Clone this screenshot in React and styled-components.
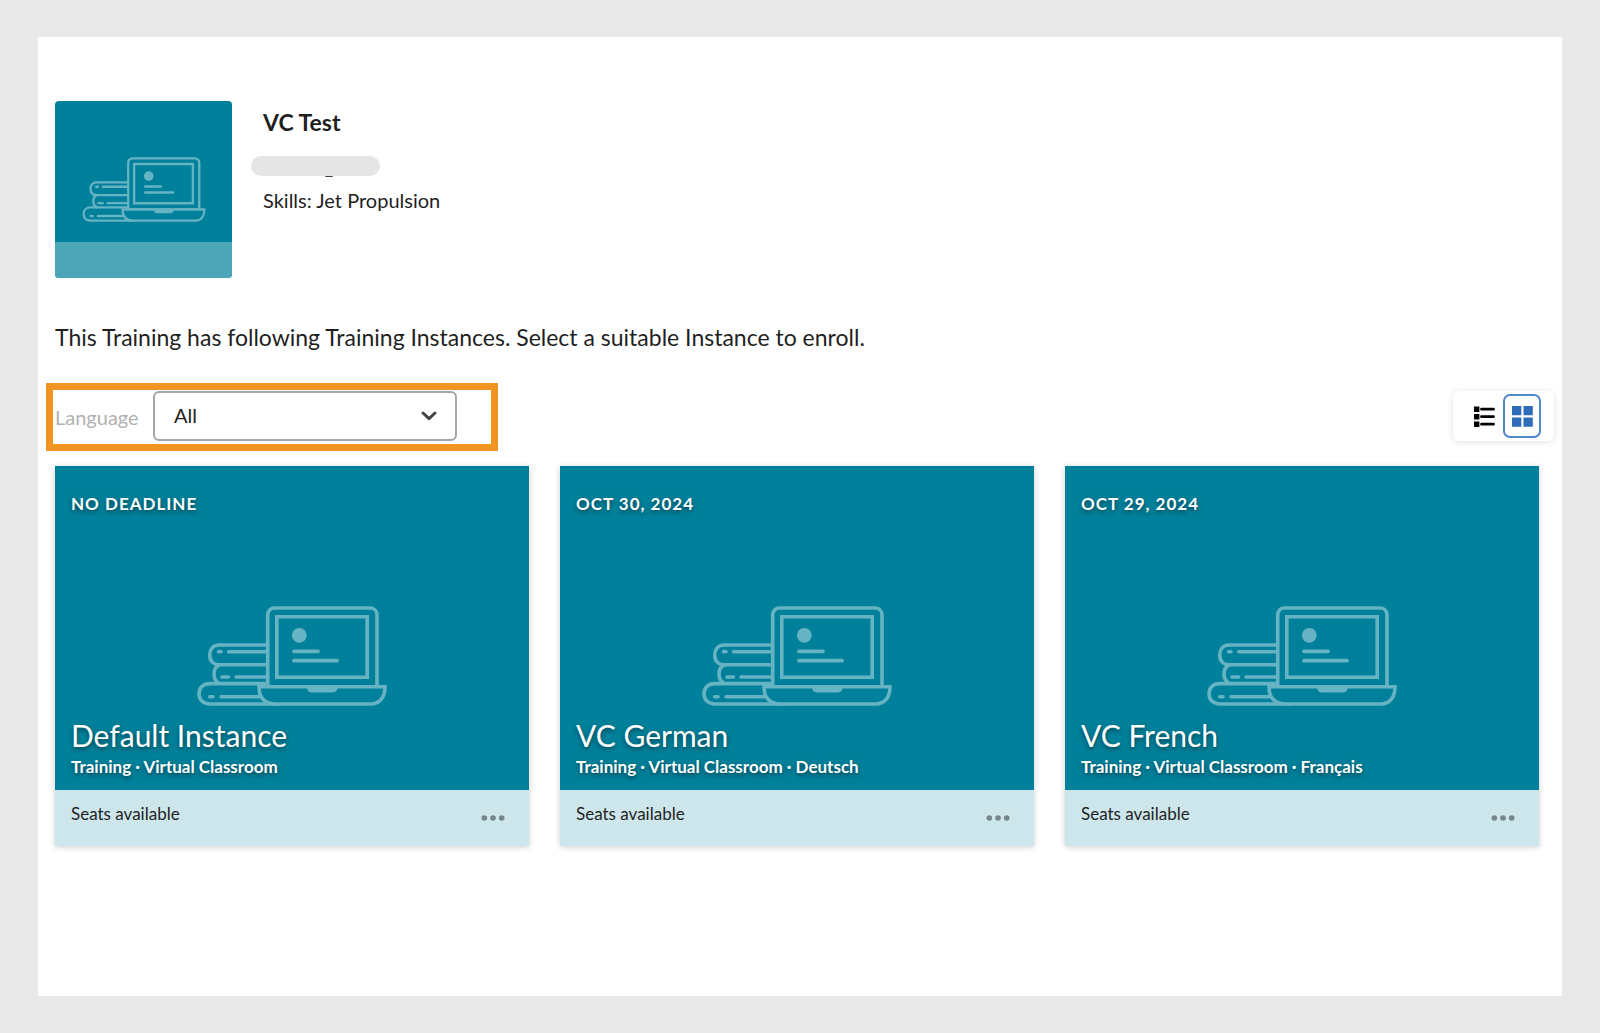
import React, { useState } from "react";
import styled, { createGlobalStyle } from "styled-components";

const TEAL = "#00809a";

const GlobalStyle = createGlobalStyle`
  *, *::before, *::after { box-sizing: border-box; }
  body {
    margin: 0;
    background: #e9e9e9;
    color: #1f1f1f;
    font-family: Lato, "Open Sans", "Noto Sans", sans-serif;
  }
  h1, h2, p { margin: 0; font-weight: 400; }
  button, select { font: inherit; color: inherit; }
`;

const Page = styled.div`
  min-height: 100vh;
  padding: 37px 38px;
  display: flex;
`;

const Panel = styled.main`
  flex: 1;
  background: #fff;
  padding: 64px 23px 64px 17px;
`;

const Header = styled.header`
  display: flex;
  gap: 31px;
`;

const Thumbnail = styled.div`
  width: 177px;
  height: 177px;
  border-radius: 4px;
  overflow: hidden;
  background: ${TEAL};
  display: flex;
  flex-direction: column;
  justify-content: flex-end;
  align-items: center;
  gap: 20px;
`;

const ThumbnailStrip = styled.div`
  align-self: stretch;
  height: 36px;
  background: #4da6b8;
`;

const Summary = styled.div`
  padding-top: 6px;
  display: flex;
  flex-direction: column;
`;

const CourseTitle = styled.h1`
  font-size: 23px;
  line-height: 30px;
  font-weight: 700;
`;

const Redaction = styled.div`
  width: 129px;
  height: 20px;
  margin: 19px 0 9px -12px;
  border-radius: 10px;
  background: #e5e5e5;
  position: relative;

  &::after {
    content: "";
    position: absolute;
    left: 74px;
    top: 20px;
    width: 8px;
    height: 1px;
    border-radius: 0 0 4px 4px;
    background: #444;
  }
`;

const Skills = styled.p`
  font-size: 20px;
  line-height: 30px;
`;

const Intro = styled.p`
  margin-top: 43px;
  font-size: 23px;
  line-height: 32px;
`;

const Toolbar = styled.div`
  display: flex;
  align-items: center;
  justify-content: space-between;
  margin: 30px -15px 15px -9px;
`;

const LanguageFilter = styled.div`
  display: flex;
  align-items: center;
  gap: 12px;
  width: 452px;
  height: 68px;
  padding: 0 2px 2px;
  border: 7px solid #f29422;
`;

const FilterLabel = styled.label`
  width: 86px;
  padding-top: 2px;
  font-size: 20px;
  line-height: 30px;
  color: #b1b1b1;
`;

const SelectBox = styled.div`
  display: grid;
  align-items: center;
  width: 304px;

  & > * { grid-area: 1 / 1; }
  & > svg {
    justify-self: end;
    margin-right: 19px;
    pointer-events: none;
  }
`;

const Select = styled.select`
  appearance: none;
  width: 100%;
  height: 50px;
  padding: 0 48px 2px 19px;
  border: 2px solid #a6a6a6;
  border-radius: 6px;
  background: #fff;
  font-size: 20px;
`;

const ViewSwitch = styled.div`
  display: flex;
  align-items: center;
  height: 50px;
  margin-bottom: 2px;
  padding: 0 13px 0 12px;
  border-radius: 6px;
  background: #fff;
  box-shadow: 0 1px 6px rgba(0, 0, 0, 0.12);
`;

const ViewButton = styled.button`
  display: flex;
  align-items: center;
  justify-content: center;
  width: 38px;
  height: 44px;
  padding: 0;
  border: 2px solid ${(p) => (p.$active ? "#5088cc" : "transparent")};
  border-radius: 7px;
  background: transparent;
  color: ${(p) => (p.$active ? "#2c6cb8" : "#000")};
  cursor: pointer;
`;

const Cards = styled.section`
  display: grid;
  grid-template-columns: repeat(3, 1fr);
  gap: 31px;
`;

const Card = styled.article`
  box-shadow: 0 1px 6px rgba(0, 0, 0, 0.2);
`;

const CardCover = styled.div`
  display: flex;
  flex-direction: column;
  height: 324px;
  padding: 26px 16px 11px;
  background: ${TEAL};
  color: #fff;
  text-shadow: 0 2px 4px rgba(0, 0, 0, 0.5);

  & > svg {
    align-self: center;
    margin: auto 0 9px;
  }
`;

const Deadline = styled.p`
  font-size: 17px;
  line-height: 24px;
  font-weight: 700;
  letter-spacing: 1px;
  text-transform: uppercase;
`;

const CardTitle = styled.h2`
  font-size: 30px;
  line-height: 40px;
`;

const CardMeta = styled.p`
  font-size: 17px;
  line-height: 24px;
  font-weight: 700;
`;

const CardFooter = styled.footer`
  display: flex;
  align-items: center;
  justify-content: space-between;
  height: 56px;
  padding: 0 16px;
  background: #cde6eb;
`;

const Seats = styled.p`
  padding-bottom: 8px;
  font-size: 17px;
  line-height: 24px;
`;

const MoreButton = styled.button`
  display: flex;
  align-items: center;
  justify-content: center;
  width: 40px;
  height: 32px;
  padding: 0;
  border: 0;
  background: transparent;
  color: #76858a;
  cursor: pointer;
`;

function ClassroomArt({ width }) {
  return (
    <svg
      width={width}
      height={Math.round((width * 100) / 190)}
      viewBox="0 0 190 100"
      fill="none"
      stroke="#66b3c3"
      strokeWidth="3.6"
      aria-hidden="true"
    >
      <path d="M70 39H22C16 39 12.7 43.5 12.7 49C12.7 54.5 16 58.7 22 58.7H70" />
      <path d="M23 58.7C19 60 17 64 17 68C17 72.5 19 76 23 77.6" />
      <path d="M70 77.6H13C6 77.6 2 82 2 87.8C2 93.6 6 98 13 98H84" />
      <path
        strokeLinecap="round"
        d="M21.5 45.7H24M31.5 45.7H69M25 71H31.5M39 71H69M12.7 90.7H16M24 90.7H62"
      />
      <path
        fill={TEAL}
        d="M70.7 80.7V9C70.7 4.8 73.5 2 77.5 2H173C177 2 180 4.8 180 9V80.7Z"
      />
      <path d="M79.8 10.8H170.2V71.2H79.8Z" />
      <path fill={TEAL} d="M62 80.7H188C188 91 183 98 174 98H79C67 98 62 91 62 80.7Z" />
      <circle cx="102.3" cy="29.3" r="7.4" fill="#66b3c3" stroke="none" />
      <path strokeLinecap="round" strokeWidth="3.8" d="M97 45.3H121M97 54.7H140" />
      <path fill="#66b3c3" stroke="none" d="M110 80H140.7C140.7 84.5 139 86.4 136 86.4H114.5C111.5 86.4 110 84.5 110 80Z" />
    </svg>
  );
}

function ChevronIcon() {
  return (
    <svg width="18" height="12" viewBox="0 0 18 12" fill="none" aria-hidden="true">
      <path d="M3 3L9 8.6L15 3" stroke="#444" strokeWidth="3" strokeLinecap="round" strokeLinejoin="round" />
    </svg>
  );
}

function ListIcon() {
  return (
    <svg width="21" height="21" viewBox="0 0 21 21" fill="currentColor" aria-hidden="true">
      <path d="M0 0.5h5.4v5.4H0zM0 8h5.4v5.4H0zM0 15.5h5.4v5.4H0z" />
      <path d="M7.5 3.2H19.5M7.5 10.7H19.5M7.5 18.2H19.5" stroke="currentColor" strokeWidth="2.8" strokeLinecap="round" />
    </svg>
  );
}

function GridIcon() {
  return (
    <svg width="21" height="21" viewBox="0 0 21 21" fill="currentColor" aria-hidden="true">
      <path d="M0 0h9.3v9.3H0zM11.5 0h9.3v9.3h-9.3zM0 11.5h9.3v9.3H0zM11.5 11.5h9.3v9.3h-9.3z" />
    </svg>
  );
}

function MoreIcon() {
  return (
    <svg width="24" height="6" viewBox="0 0 24 6" fill="currentColor" aria-hidden="true">
      <circle cx="3.3" cy="3" r="2.8" />
      <circle cx="12" cy="3" r="2.8" />
      <circle cx="20.7" cy="3" r="2.8" />
    </svg>
  );
}

const INSTANCES = [
  { name: "Default Instance", deadline: "No deadline", meta: "Training · Virtual Classroom", language: "English" },
  { name: "VC German", deadline: "Oct 30, 2024", meta: "Training · Virtual Classroom · Deutsch", language: "Deutsch" },
  { name: "VC French", deadline: "Oct 29, 2024", meta: "Training · Virtual Classroom · Français", language: "Français" },
];

function InstanceCard({ instance }) {
  return (
    <Card>
      <CardCover>
        <Deadline>{instance.deadline}</Deadline>
        <ClassroomArt width={190} />
        <CardTitle>{instance.name}</CardTitle>
        <CardMeta>{instance.meta}</CardMeta>
      </CardCover>
      <CardFooter>
        <Seats>Seats available</Seats>
        <MoreButton type="button" aria-label="More options">
          <MoreIcon />
        </MoreButton>
      </CardFooter>
    </Card>
  );
}

export default function App() {
  const [language, setLanguage] = useState("All");
  const [view, setView] = useState("grid");
  const shown = INSTANCES.filter((i) => language === "All" || i.language === language);

  return (
    <>
      <GlobalStyle />
      <Page>
        <Panel>
          <Header>
            <Thumbnail>
              <ClassroomArt width={124} />
              <ThumbnailStrip />
            </Thumbnail>
            <Summary>
              <CourseTitle>VC Test</CourseTitle>
              <Redaction />
              <Skills>Skills: Jet Propulsion</Skills>
            </Summary>
          </Header>
          <Intro>This Training has following Training Instances. Select a suitable Instance to enroll.</Intro>
          <Toolbar>
            <LanguageFilter>
              <FilterLabel htmlFor="language">Language</FilterLabel>
              <SelectBox>
                <Select id="language" value={language} onChange={(e) => setLanguage(e.target.value)}>
                  <option>All</option>
                  <option>English</option>
                  <option>Deutsch</option>
                  <option>Français</option>
                </Select>
                <ChevronIcon />
              </SelectBox>
            </LanguageFilter>
            <ViewSwitch>
              <ViewButton type="button" aria-label="List view" $active={view === "list"} onClick={() => setView("list")}>
                <ListIcon />
              </ViewButton>
              <ViewButton type="button" aria-label="Grid view" $active={view === "grid"} onClick={() => setView("grid")}>
                <GridIcon />
              </ViewButton>
            </ViewSwitch>
          </Toolbar>
          <Cards>
            {shown.map((instance) => (
              <InstanceCard key={instance.name} instance={instance} />
            ))}
          </Cards>
        </Panel>
      </Page>
    </>
  );
}
